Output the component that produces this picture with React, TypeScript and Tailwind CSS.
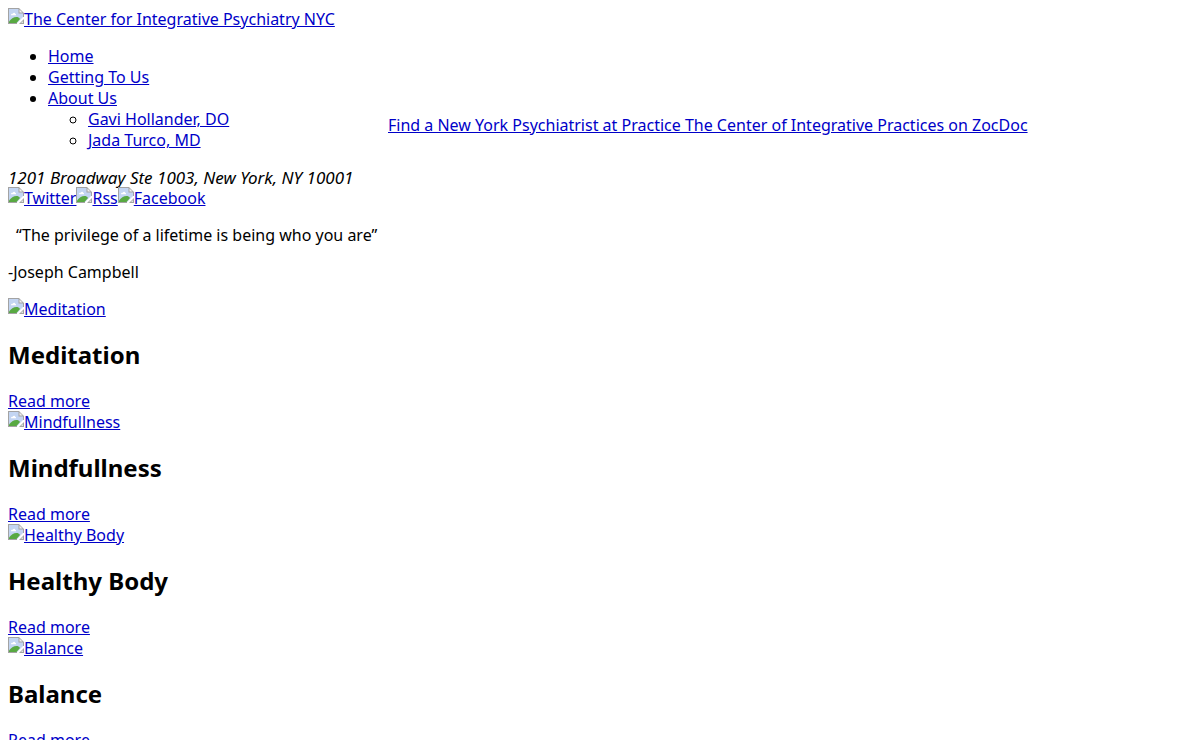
import type { ReactNode } from "react";

const topics = ["Meditation", "Mindfullness", "Healthy Body", "Balance"];

function PictureIcon() {
  return (
    <svg width="16" height="16" viewBox="0 0 16 16" className="-mt-px shrink-0" aria-hidden="true">
      <path d="M1 1H11V5H15V9L9 15H1Z" fill="#c3d5f2" />
      <path d="M3 7C3 5.8 4 5.5 4.7 5.7C5.3 4.3 7 4.5 7.2 5.8C8 5.8 8.2 6.8 8 7.2H3Z" fill="#fff" />
      <path d="M1 15V13.5C3 11 5.5 9 8.5 9C10 9 11 9.5 12 11L8.5 15Z" fill="#58a942" />
      <path d="M0 0H11V1H1V15H9V16H0Z" fill="#a3a3a3" />
      <path d="M11 0L16 5V9H15V5.5H10.5V0Z" fill="#a3a3a3" />
      <path d="M11.5 1.5V4.5H14.5Z" fill="#f1f1f1" />
      <path d="M16 11V16H11Z" fill="#a3a3a3" />
      <path d="M15 13V15H13Z" fill="#dfe8df" />
    </svg>
  );
}

function TextLink({ children }: { children: ReactNode }) {
  return (
    <a href="#" className="text-[#0000c8] underline">
      {children}
    </a>
  );
}

function PictureLink({ label }: { label: string }) {
  return (
    <a href="#" className="flex w-fit items-start text-[#0000c8]">
      <PictureIcon />
      <span className="underline">{label}</span>
    </a>
  );
}

export default function App() {
  return (
    <div className="bg-white px-2 pt-[9px] pb-2 font-['Noto_Sans','Open_Sans',sans-serif] text-[16px] leading-[21px] text-black">
      <header>
        <PictureLink label="The Center for Integrative Psychiatry NYC" />
        <div className="my-4 flex items-end">
          <nav className="w-[380px] shrink-0">
            <ul className="list-disc pl-10">
              <li><TextLink>Home</TextLink></li>
              <li><TextLink>Getting To Us</TextLink></li>
              <li>
                <TextLink>About Us</TextLink>
                <ul className="list-[circle] pl-10">
                  <li><TextLink>Gavi Hollander, DO</TextLink></li>
                  <li><TextLink>Jada Turco, MD</TextLink></li>
                </ul>
              </li>
            </ul>
          </nav>
          <div className="pb-[15px]">
            <TextLink>
              Find a New York Psychiatrist at Practice The Center of Integrative Practices on ZocDoc
            </TextLink>
          </div>
        </div>
        <address className="text-[17px] italic">1201 Broadway Ste 1003, New York, NY 10001</address>
        <div className="flex">
          <PictureLink label="Twitter" />
          <PictureLink label="Rss" />
          <PictureLink label="Facebook" />
        </div>
      </header>
      <main>
        <p className="my-4 pl-2">“The privilege of a lifetime is being who you are”</p>
        <p className="my-4">-Joseph Campbell</p>
        {topics.map((topic) => (
          <section key={topic}>
            <PictureLink label={topic} />
            <h2 className="mt-[19px] mb-[21px] text-[24px] leading-[31px] font-bold">{topic}</h2>
            <TextLink>Read more</TextLink>
          </section>
        ))}
      </main>
    </div>
  );
}
